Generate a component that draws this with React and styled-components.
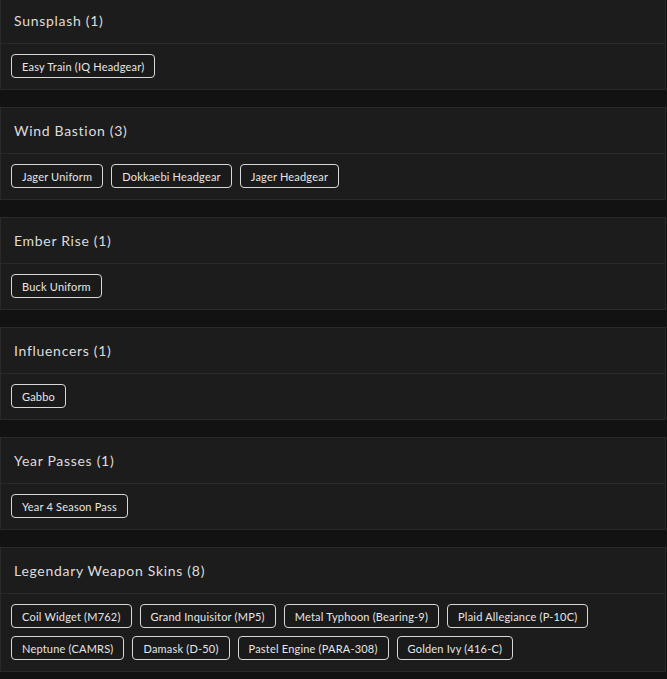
import styled, { createGlobalStyle } from 'styled-components'

const GlobalStyle = createGlobalStyle`
    html, body {
        margin: 0;
        padding: 0;
        background-color: #121212;
    }
    body {
        font-family: Lato, "Noto Sans", sans-serif;
        overflow: hidden;
    }
`

const groups = [
    { name: 'Sunsplash', items: ['Easy Train (IQ Headgear)'] },
    { name: 'Wind Bastion', items: ['Jager Uniform', 'Dokkaebi Headgear', 'Jager Headgear'] },
    { name: 'Ember Rise', items: ['Buck Uniform'] },
    { name: 'Influencers', items: ['Gabbo'] },
    { name: 'Year Passes', items: ['Year 4 Season Pass'] },
    {
        name: 'Legendary Weapon Skins',
        items: [
            'Coil Widget (M762)',
            'Grand Inquisitor (MP5)',
            'Metal Typhoon (Bearing-9)',
            'Plaid Allegiance (P-10C)',
            'Neptune (CAMRS)',
            'Damask (D-50)',
            'Pastel Engine (PARA-308)',
            'Golden Ivy (416-C)',
        ],
    },
]

function App() {
    return (
        <>
            <GlobalStyle />
            <List>
                {groups.map(group => (
                    <Card key={group.name}>
                        <Header>{group.name} ({group.items.length})</Header>
                        <Body>
                            {group.items.map(item => (
                                <Chip key={item}>{item}</Chip>
                            ))}
                        </Body>
                    </Card>
                ))}
            </List>
        </>
    )
}

export default App

const List = styled.div`
    display: flex;
    flex-direction: column;
    gap: 17px;
    margin-top: -3px;
    margin-right: 1px;
`

const Card = styled.section`
    background-color: #1c1c1c;
    border: 1px solid #2a2a2a;
`

const Header = styled.div`
    height: 45px;
    display: flex;
    align-items: center;
    padding: 0 13px;
    font-size: 14px;
    letter-spacing: 0.7px;
    color: #dcdcdc;
    border-bottom: 1px solid #2a2a2a;
`

const Body = styled.div`
    display: flex;
    flex-wrap: wrap;
    gap: 8px;
    padding: 10px 10px 11px;
`

const Chip = styled.button`
    height: 24px;
    padding: 0 10px;
    background-color: #1a1a1a;
    border: 1px solid #d8d8d8;
    border-radius: 4px;
    color: #e6e6e6;
    font-family: Lato, "Noto Sans", sans-serif;
    font-size: 11px;
    letter-spacing: 0.2px;
    cursor: pointer;
`
